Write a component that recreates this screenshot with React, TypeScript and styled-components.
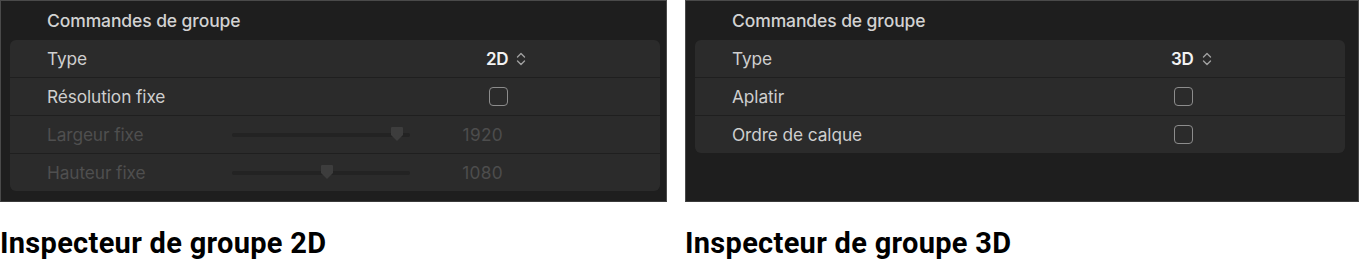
import React from 'react';
import styled, { createGlobalStyle } from 'styled-components';

const GlobalStyle = createGlobalStyle`
  html, body {
    margin: 0;
    padding: 0;
    background: #ffffff;
  }
  body {
    font-family: Inter, "Liberation Sans", sans-serif;
  }
`;

const Page = styled.div`
  display: flex;
  gap: 18px;
  width: 1359px;
  height: 267px;
  overflow: hidden;
`;

const Column = styled.div<{ $width: number }>`
  display: flex;
  flex-direction: column;
  width: ${p => p.$width}px;
`;

const Panel = styled.div`
  box-sizing: border-box;
  height: 202px;
  background: #1e1e1e;
  border: 1px solid #4a4a4a;
  border-bottom-color: #3a3a3a;
  padding: 0 0 0 9px;
  display: flex;
  flex-direction: column;
`;

const Heading = styled.div`
  height: 39px;
  display: flex;
  align-items: center;
  padding-left: 37px;
  padding-bottom: 1px;
  box-sizing: border-box;
  color: #d2d2d2;
  font-size: 17.5px;
  font-weight: 500;
  letter-spacing: -0.1px;
`;

const Card = styled.div`
  width: 650px;
  display: flex;
  flex-direction: column;
  gap: 1px;
  background: #1f1f1f;
  border-radius: 6px;
  overflow: hidden;
`;

const Row = styled.div`
  height: 37px;
  background: #2b2b2b;
  display: grid;
  grid-template-columns: 185px 178px 1fr;
  align-items: center;
  padding-left: 37px;
`;

const Label = styled.span<{ $disabled?: boolean }>`
  color: ${p => (p.$disabled ? '#4f4f4f' : '#cfcfcf')};
  font-size: 17.3px;
  letter-spacing: -0.1px;
`;

const Control = styled.div<{ $offset: number }>`
  grid-column: 2 / 4;
  display: flex;
  align-items: center;
  gap: 8px;
  padding-left: ${p => p.$offset}px;
`;

const PopupValue = styled.span`
  color: #f2f2f2;
  font-size: 17px;
  font-weight: 600;
  letter-spacing: -0.3px;
`;

const Checkbox = styled.span`
  box-sizing: border-box;
  width: 19px;
  height: 19px;
  border: 1.5px solid #8c8c8c;
  border-radius: 4px;
`;

const Track = styled.div`
  position: relative;
  height: 4px;
  border-radius: 2px;
  background: #232323;
`;

const Thumb = styled.svg`
  position: absolute;
  top: -7px;
  margin-left: -7px;
`;

const Number = styled.span`
  color: #4d4d4d;
  font-size: 17.3px;
  letter-spacing: 0.3px;
  text-align: right;
  width: 93px;
`;

const Caption = styled.div`
  margin-top: 24px;
  color: #000;
  font-family: Roboto, "Liberation Sans", sans-serif;
  font-weight: 700;
  font-size: 29px;
  letter-spacing: 0.3px;
`;

const Chevrons = () => (
  <svg width="10" height="16" viewBox="0 0 10 16" fill="none">
    <path d="M1.5 6 L5 2.5 L8.5 6" stroke="#a0a0a0" strokeWidth="1.4" strokeLinecap="round" strokeLinejoin="round" />
    <path d="M1.5 10 L5 13.5 L8.5 10" stroke="#a0a0a0" strokeWidth="1.4" strokeLinecap="round" strokeLinejoin="round" />
  </svg>
);

const Slider = ({ pos }: { pos: number }) => (
  <Track>
    <Thumb width="14" height="16" viewBox="0 0 14 16" style={{ left: `${pos}px` }}>
      <path d="M2 1 H12 a1 1 0 0 1 1 1 V9 L7 15 L1 9 V2 a1 1 0 0 1 1 -1 Z" fill="#3d3d3d" />
    </Thumb>
  </Track>
);

type RowSpec =
  | { kind: 'popup'; label: string; value: string }
  | { kind: 'check'; label: string }
  | { kind: 'slider'; label: string; value: string; pos: number };

const Inspector = ({ rows }: { rows: RowSpec[] }) => (
  <Card>
    {rows.map(r => (
      <Row key={r.label}>
        <Label $disabled={r.kind === 'slider'}>{r.label}</Label>
        {r.kind === 'popup' && (
          <Control $offset={254}>
            <PopupValue>{r.value}</PopupValue>
            <Chevrons />
          </Control>
        )}
        {r.kind === 'check' && (
          <Control $offset={257}>
            <Checkbox />
          </Control>
        )}
        {r.kind === 'slider' && (
          <>
            <Slider pos={r.pos} />
            <Number>{r.value}</Number>
          </>
        )}
      </Row>
    ))}
  </Card>
);

const App = () => (
  <>
    <GlobalStyle />
    <Page>
      <Column $width={667}>
        <Panel>
          <Heading>Commandes de groupe</Heading>
          <Inspector
            rows={[
              { kind: 'popup', label: 'Type', value: '2D' },
              { kind: 'check', label: 'Résolution fixe' },
              { kind: 'slider', label: 'Largeur fixe', value: '1920', pos: 165 },
              { kind: 'slider', label: 'Hauteur fixe', value: '1080', pos: 95 },
            ]}
          />
        </Panel>
        <Caption>Inspecteur de groupe 2D</Caption>
      </Column>
      <Column $width={674}>
        <Panel>
          <Heading>Commandes de groupe</Heading>
          <Inspector
            rows={[
              { kind: 'popup', label: 'Type', value: '3D' },
              { kind: 'check', label: 'Aplatir' },
              { kind: 'check', label: 'Ordre de calque' },
            ]}
          />
        </Panel>
        <Caption>Inspecteur de groupe 3D</Caption>
      </Column>
    </Page>
  </>
);

export default App;
